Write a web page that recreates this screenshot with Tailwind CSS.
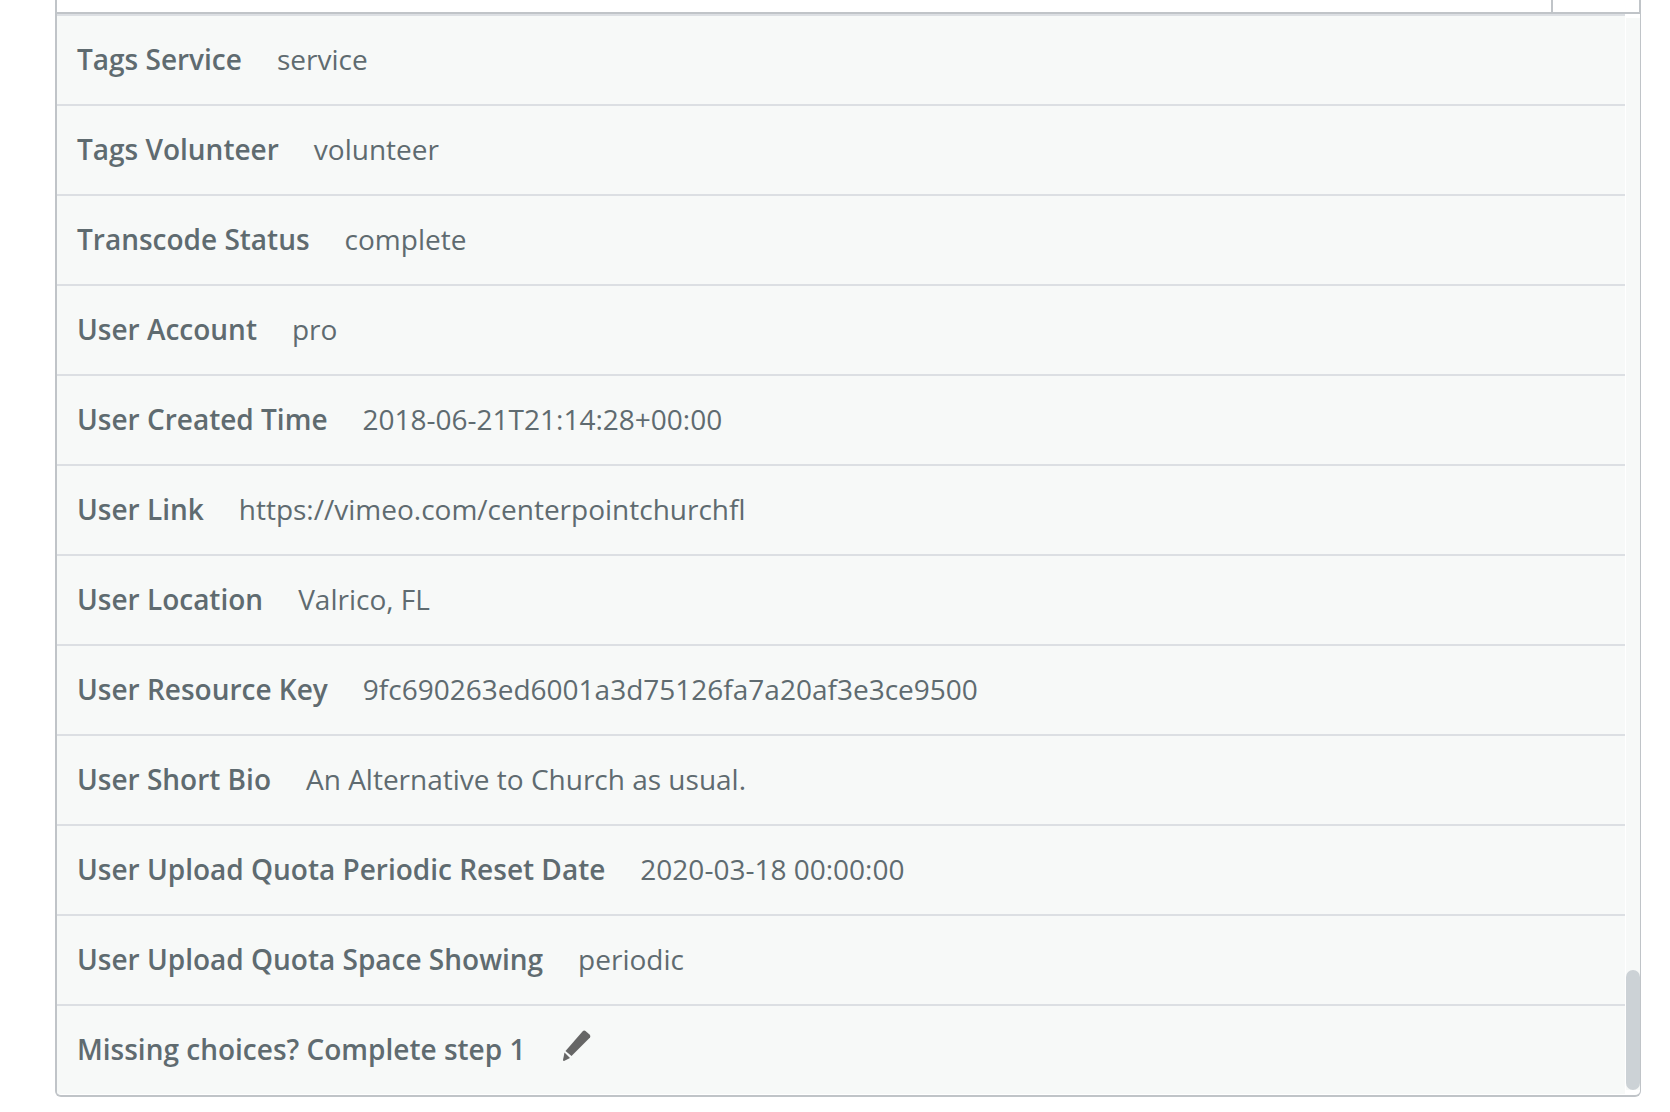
<!DOCTYPE html>
<html lang="en">
<head>
  <meta charset="UTF-8" />
  <meta name="viewport" content="width=device-width, initial-scale=1.0" />
  <title>Choose a field</title>
  <script src="https://cdn.jsdelivr.net/npm/@tailwindcss/browser@4"></script>
</head>
<body class="bg-white pl-[55px] pr-[29px] font-['Open_Sans',sans-serif] text-[28px] leading-[38px] text-[#5f6b70]">

  <!-- bottom edge of the search field and its toggle -->
  <div class="flex h-[14px] border-x-2 border-b-2 border-[#c0c4c8]">
    <input type="text" aria-label="Search fields" class="h-full min-w-0 flex-1 outline-none" />
    <button type="button" aria-label="Toggle list" class="h-full w-[88px] border-l-2 border-[#c0c4c8]"></button>
  </div>

  <div class="flex overflow-hidden rounded-b-md border-b-2 border-l-2 border-r border-[#c0c4c8] pb-px">
    <ul id="fieldList" class="mr-px min-w-0 flex-1 bg-[#f7f9f8]">
      <li class="border-t-2 border-[#dcdfe3]">
        <button type="button" class="flex w-full gap-[35px] px-5 pt-6 pb-[26px] text-left"><span class="font-semibold">Tags Service</span><span>service</span></button>
      </li>
      <li class="border-t-2 border-[#dcdfe3]">
        <button type="button" class="flex w-full gap-[35px] px-5 pt-6 pb-[26px] text-left"><span class="font-semibold">Tags Volunteer</span><span>volunteer</span></button>
      </li>
      <li class="border-t-2 border-[#dcdfe3]">
        <button type="button" class="flex w-full gap-[35px] px-5 pt-6 pb-[26px] text-left"><span class="font-semibold">Transcode Status</span><span>complete</span></button>
      </li>
      <li class="border-t-2 border-[#dcdfe3]">
        <button type="button" class="flex w-full gap-[35px] px-5 pt-6 pb-[26px] text-left"><span class="font-semibold">User Account</span><span>pro</span></button>
      </li>
      <li class="border-t-2 border-[#dcdfe3]">
        <button type="button" class="flex w-full gap-[35px] px-5 pt-6 pb-[26px] text-left"><span class="font-semibold">User Created Time</span><span>2018-06-21T21:14:28+00:00</span></button>
      </li>
      <li class="border-t-2 border-[#dcdfe3]">
        <button type="button" class="flex w-full gap-[35px] px-5 pt-6 pb-[26px] text-left"><span class="font-semibold">User Link</span><span>https://vimeo.com/centerpointchurchfl</span></button>
      </li>
      <li class="border-t-2 border-[#dcdfe3]">
        <button type="button" class="flex w-full gap-[35px] px-5 pt-6 pb-[26px] text-left"><span class="font-semibold">User Location</span><span>Valrico, FL</span></button>
      </li>
      <li class="border-t-2 border-[#dcdfe3]">
        <button type="button" class="flex w-full gap-[35px] px-5 pt-6 pb-[26px] text-left"><span class="font-semibold">User Resource Key</span><span>9fc690263ed6001a3d75126fa7a20af3e3ce9500</span></button>
      </li>
      <li class="border-t-2 border-[#dcdfe3]">
        <button type="button" class="flex w-full gap-[35px] px-5 pt-6 pb-[26px] text-left"><span class="font-semibold">User Short Bio</span><span>An Alternative to Church as usual.</span></button>
      </li>
      <li class="border-t-2 border-[#dcdfe3]">
        <button type="button" class="flex w-full gap-[35px] px-5 pt-6 pb-[26px] text-left"><span class="font-semibold">User Upload Quota Periodic Reset Date</span><span>2020-03-18 00:00:00</span></button>
      </li>
      <li class="border-t-2 border-[#dcdfe3]">
        <button type="button" class="flex w-full gap-[35px] px-5 pt-6 pb-[26px] text-left"><span class="font-semibold">User Upload Quota Space Showing</span><span>periodic</span></button>
      </li>
      <li class="border-t-2 border-[#dcdfe3]">
        <button type="button" class="flex w-full gap-[35px] px-5 pt-6 pb-[26px] text-left">
          <span class="font-semibold">Missing choices? Complete step 1</span>
          <svg class="h-8 w-8" viewBox="0 0 32 32" fill="#666" aria-hidden="true">
            <path d="M11.500 26 5.500 21 22.500 1.500Q24 0 25.500 1L29.500 4.500Q31 6 30 7.500Z" />
            <path d="M4.500 22.500 10 28 4 31Q3 31 3 30Z" />
          </svg>
        </button>
      </li>
    </ul>

    <!-- scrollbar -->
    <div class="flex w-[14px] flex-col pt-1 pb-1" aria-hidden="true">
      <div class="flex flex-1 flex-col justify-end bg-[#f7f9f8]">
        <div class="h-[120px] rounded-full bg-[#ccd2d6]"></div>
      </div>
    </div>
  </div>

</body>
</html>
